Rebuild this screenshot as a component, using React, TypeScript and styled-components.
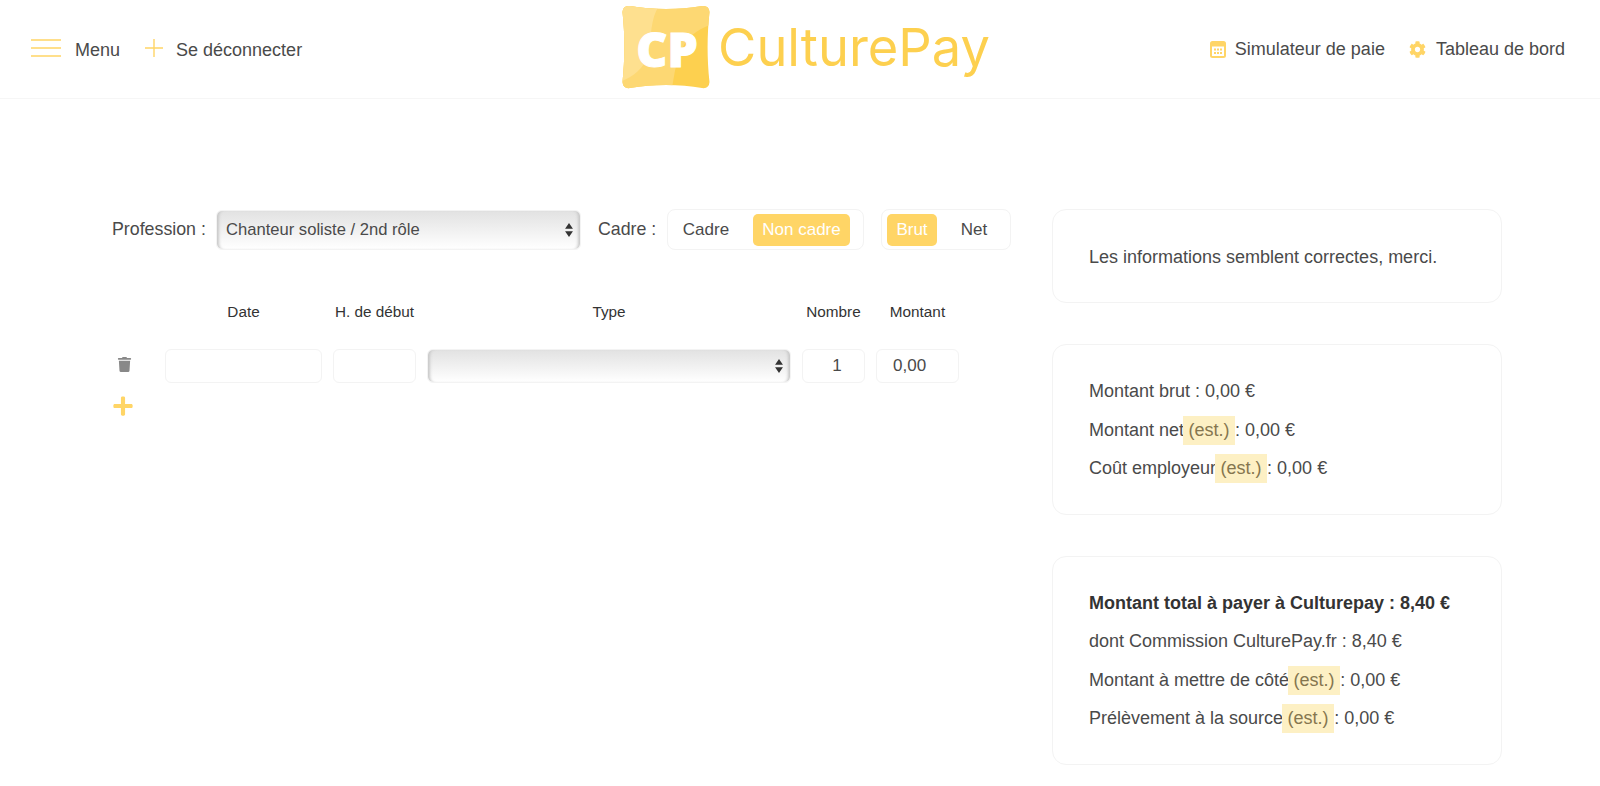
import React from "react";
import styled, { createGlobalStyle } from "styled-components";
import { FaCog, FaPlus, FaTrash } from "react-icons/fa";

const GlobalStyle = createGlobalStyle`
  html, body {
    margin: 0;
    padding: 0;
    background: #fff;
    font-family: "Liberation Sans", Arial, sans-serif;
    color: #444;
  }
  * { box-sizing: border-box; }
`;

const yellow = "#ffd566";

const Header = styled.header`
  height: 99px;
  border-bottom: 1px solid #f6f6f6;
  display: grid;
  grid-template-columns: 1fr auto 1fr;
  align-items: center;
  padding: 0 35px 0 31px;
`;
const NavLeft = styled.nav`
  display: flex;
  align-items: center;
  padding-top: 2px;
  svg {
    margin-top: -4px;
  }
`;
const NavRight = styled.nav`
  display: flex;
  align-items: center;
  justify-content: flex-end;
  gap: 24px;
`;
const NavLink = styled.a<{ $gap: number; $right?: number }>`
  display: flex;
  align-items: center;
  gap: ${({ $gap }) => $gap}px;
  margin-right: ${({ $right }) => $right || 0}px;
  font-size: 18px;
  color: #4a4a4a;
  white-space: nowrap;
`;
const Logo = styled.div`
  display: flex;
  align-items: center;
  gap: 8px;
  margin: 0 0 5px 16px;
`;
const LogoText = styled.span`
  font-family: Inter, sans-serif;
  font-weight: 400;
  font-size: 52.4px;
  color: #fdd04f;
`;

const Main = styled.main`
  display: flex;
  gap: 41px;
  padding: 110px 98px 20px 112px;
`;
const FormColumn = styled.section`
  width: 899px;
`;
const Toolbar = styled.div`
  display: flex;
  align-items: center;
  height: 41px;
`;
const FieldLabel = styled.label<{ $width: number }>`
  flex: none;
  width: ${({ $width }) => $width}px;
  font-size: 17.8px;
  color: #4a4a4a;
  white-space: nowrap;
`;
const SelectWrap = styled.div<{ $width: number }>`
  position: relative;
  flex: none;
  width: ${({ $width }) => $width}px;
  height: ${({ $width }) => ($width > 364 ? 40 : 34)}px;
  margin-right: ${({ $width }) => ($width > 364 ? 17 : 0)}px;
`;
const Select = styled.select`
  appearance: none;
  width: 100%;
  height: 100%;
  padding: 0 24px 0 9px;
  border: 1px solid #f3f3f3;
  border-radius: 6px;
  background: linear-gradient(#e2e2e2, #fff);
  box-shadow: inset 4px 0 3px -2px #c8c8c8, inset -4px 0 3px -2px #c8c8c8;
  font: 16.6px "Liberation Sans", Arial, sans-serif;
  color: #4a4a4a;
`;
const SelectArrows = styled.svg`
  position: absolute;
  top: 50%;
  right: 8px;
  width: 8px;
  height: 14px;
  margin-top: -7px;
  fill: #333;
  pointer-events: none;
`;
const Toggle = styled.div<{ $width: number; $last?: boolean }>`
  flex: none;
  display: flex;
  align-items: center;
  justify-content: space-between;
  width: ${({ $width }) => $width}px;
  height: 41px;
  margin-right: ${({ $last }) => ($last ? 0 : 17)}px;
  padding: 0 13px 0 5px;
  border: 1px solid #f3f3f3;
  border-radius: 8px;
`;
const ToggleOption = styled.span<{ $active?: boolean; $width: number }>`
  width: ${({ $width }) => $width}px;
  height: 32px;
  line-height: 31px;
  text-align: center;
  font-size: 17px;
  border-radius: 5px;
  color: ${({ $active }) => ($active ? "#fff" : "#4a4a4a")};
  background: ${({ $active }) => ($active ? yellow : "transparent")};
`;

const Lines = styled.div`
  display: grid;
  grid-template-columns: 42px 157px 83px 364px 63px 83px;
  column-gap: 11px;
  margin-top: 53px;
`;
const ColumnTitle = styled.div`
  height: 18px;
  margin-bottom: 28px;
  line-height: 18px;
  text-align: center;
  font-size: 15.3px;
  color: #333;
  white-space: nowrap;
`;
const TrashCell = styled.div`
  display: flex;
  align-items: center;
  padding: 0 0 4px 5px;
  color: #888;
  font-size: 15px;
`;
const Input = styled.input<{ $number?: boolean }>`
  width: 100%;
  height: 34px;
  padding: 0 16px 0 ${({ $number }) => ($number ? 23 : 16)}px;
  border: 1px solid #f3f3f3;
  border-radius: 6px;
  background: #fff;
  text-align: ${({ $number }) => ($number ? "center" : "left")};
  font: 17px "Liberation Sans", Arial, sans-serif;
  color: #4a4a4a;
`;
const AddLine = styled.div`
  margin-top: 12px;
  color: ${yellow};
  font-size: 22px;
  line-height: 0;
`;

const Summary = styled.aside`
  width: 450px;
  display: flex;
  flex-direction: column;
  gap: 41px;
`;
const Card = styled.div`
  padding: 27.5px 36px 26px;
  border: 1px solid #f3f3f3;
  border-radius: 14px;
`;
const CardLine = styled.p`
  margin: 0;
  height: 38.4px;
  line-height: 38.4px;
  font-size: 18px;
  color: #4a4a4a;
  white-space: nowrap;
`;
const Estimate = styled.span`
  display: inline-block;
  height: 29px;
  line-height: 29px;
  margin: 0 -5px 0 -1px;
  padding: 0 5.5px;
  background: #fdf0c4;
  color: #85764f;
`;
const Total = styled.strong`
  font-weight: 700;
  color: #333;
`;

function LogoMark() {
  return (
    <svg width="88" height="84" viewBox="0 0 88 84">
      <defs>
        <clipPath id="logo-shape">
          <path d="M8 1 C30 5 58 5 80 1 Q87 0 87.5 7 C85 30 85 54 87.5 77 Q87 84 80 83 C58 79 30 79 8 83 Q1 84 .5 77 C3 54 3 30 .5 7 Q1 0 8 1 Z" />
        </clipPath>
      </defs>
      <g clipPath="url(#logo-shape)">
        <rect width="88" height="84" fill="#fdd04f" />
        <path d="M0 0 H88 V20 C60 30 55 50 50 84 H0 Z" fill="#fdd873" />
        <path d="M0 0 H38 C28 12 30 30 26 50 C22 64 10 72 0 76 Z" fill="#fee08f" />
        <text x="45" y="62" textAnchor="middle" fontFamily="Open Sans, sans-serif" fontWeight="800" fontSize="48" letterSpacing="0" stroke="#fff" strokeWidth="1" fill="#fff">
          CP
        </text>
      </g>
    </svg>
  );
}

function CalculatorIcon() {
  return (
    <svg width="16" height="17" viewBox="0 0 16 17" fill={yellow}>
      <path fillRule="evenodd" d="M2.500 0h11A2.500 2.500 0 0 1 16 2.500v12a2.500 2.500 0 0 1-2.500 2.500h-11A2.500 2.500 0 0 1 0 14.500v-12A2.500 2.500 0 0 1 2.500 0ZM2 5.500v9a.5.5 0 0 0 .5.5h11a.5.5 0 0 0 .5-.5v-9Z" />
      <rect x="4" y="7.500" width="2" height="2" />
      <rect x="7" y="7.500" width="2" height="2" />
      <rect x="10" y="7.500" width="2" height="2" />
      <rect x="4" y="11" width="2" height="2" />
      <rect x="7" y="11" width="2" height="2" />
      <rect x="10" y="11" width="2" height="2" />
    </svg>
  );
}

function App() {
  return (
    <>
      <GlobalStyle />
      <Header>
        <NavLeft>
          <NavLink $gap={14} $right={25}>
            <svg width="30" height="18" viewBox="0 0 30 18" stroke={yellow} strokeWidth="1.4">
              <path d="M0 1H30M0 9H30M0 17H30" />
            </svg>
            Menu
          </NavLink>
          <NavLink $gap={13}>
            <svg width="18" height="18" viewBox="0 0 18 18" stroke={yellow} strokeWidth="1.4">
              <path d="M9 0V18M0 9H18" />
            </svg>
            Se déconnecter
          </NavLink>
        </NavLeft>
        <Logo>
          <LogoMark />
          <LogoText>CulturePay</LogoText>
        </Logo>
        <NavRight>
          <NavLink $gap={9}>
            <CalculatorIcon />
            Simulateur de paie
          </NavLink>
          <NavLink $gap={10}>
            <FaCog size={17} color={yellow} />
            Tableau de bord
          </NavLink>
        </NavRight>
      </Header>
      <Main>
        <FormColumn>
          <Toolbar>
            <FieldLabel $width={104}>Profession :</FieldLabel>
            <SelectWrap $width={365}>
              <Select defaultValue="chanteur">
                <option value="chanteur">Chanteur soliste / 2nd rôle</option>
              </Select>
              <SelectArrows viewBox="0 0 9 16">
                <path d="M4.500 0L9 6.500H0ZM4.500 16L0 9.500H9Z" />
              </SelectArrows>
            </SelectWrap>
            <FieldLabel $width={69}>Cadre :</FieldLabel>
            <Toggle $width={197}>
              <ToggleOption $width={66}>Cadre</ToggleOption>
              <ToggleOption $width={97} $active>Non cadre</ToggleOption>
            </Toggle>
            <Toggle $width={130} $last>
              <ToggleOption $width={50} $active>Brut</ToggleOption>
              <ToggleOption $width={46}>Net</ToggleOption>
            </Toggle>
          </Toolbar>
          <Lines>
            <span />
            <ColumnTitle>Date</ColumnTitle>
            <ColumnTitle>H. de début</ColumnTitle>
            <ColumnTitle>Type</ColumnTitle>
            <ColumnTitle>Nombre</ColumnTitle>
            <ColumnTitle>Montant</ColumnTitle>
            <TrashCell><FaTrash /></TrashCell>
            <Input />
            <Input />
            <SelectWrap $width={364}>
              <Select defaultValue="" />
              <SelectArrows viewBox="0 0 9 16">
                <path d="M4.500 0L9 6.500H0ZM4.500 16L0 9.500H9Z" />
              </SelectArrows>
            </SelectWrap>
            <Input $number defaultValue="1" />
            <Input defaultValue="0,00" />
          </Lines>
          <AddLine><FaPlus /></AddLine>
        </FormColumn>
        <Summary>
          <Card>
            <CardLine>Les informations semblent correctes, merci.</CardLine>
          </Card>
          <Card>
            <CardLine>Montant brut : 0,00 €</CardLine>
            <CardLine>Montant net<Estimate>(est.)</Estimate> : 0,00 €</CardLine>
            <CardLine>Coût employeur<Estimate>(est.)</Estimate> : 0,00 €</CardLine>
          </Card>
          <Card>
            <CardLine><Total>Montant total à payer à Culturepay : 8,40 €</Total></CardLine>
            <CardLine>dont Commission CulturePay.fr : 8,40 €</CardLine>
            <CardLine>Montant à mettre de côté<Estimate>(est.)</Estimate> : 0,00 €</CardLine>
            <CardLine>Prélèvement à la source<Estimate>(est.)</Estimate> : 0,00 €</CardLine>
          </Card>
        </Summary>
      </Main>
    </>
  );
}

export default App;
